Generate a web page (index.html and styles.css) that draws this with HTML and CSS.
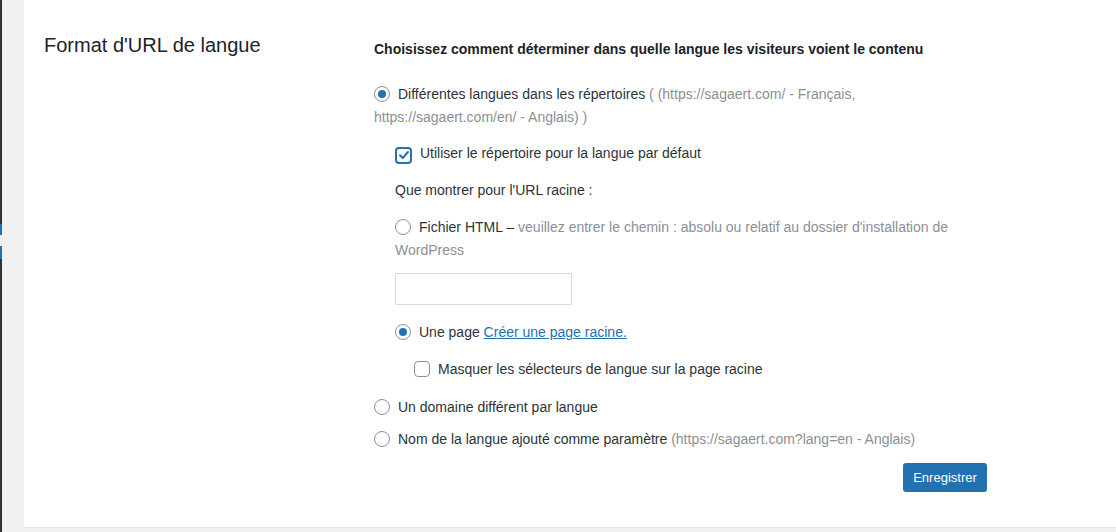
FILE: index.html
```html
<!DOCTYPE html>
<html lang="fr">
<head>
  <meta charset="UTF-8">
  <meta name="viewport" content="width=device-width, initial-scale=1.0">
  <title>Format d'URL de langue</title>
  <link rel="stylesheet" href="styles.css">
</head>
<body>
  <div class="layout">
    <div class="admin-menu">
      <div class="menu-dark menu-top"></div>
      <div class="menu-current"></div>
      <div class="menu-arrow"></div>
      <div class="menu-current menu-current-end"></div>
      <div class="menu-dark menu-rest"></div>
    </div>
    <div class="page">
      <div class="panel">
        <div class="setting-row">
          <h2 class="setting-label">Format d'URL de langue</h2>
          <div class="setting-field">
            <p class="field-title">Choisissez comment déterminer dans quelle langue les visiteurs voient le contenu</p>

            <label class="option option-first">
              <span class="radio checked"></span>Différentes langues dans les répertoires <span class="muted">( (https://sagaert.com/ - Français,</span><br>
              <span class="muted">https://sagaert.com/en/ - Anglais) )</span>
            </label>

            <div class="sub-options">
              <label class="option option-check">
                <span class="checkbox checked">
                  <svg width="12" height="12" viewBox="0 0 12 12"><path d="M2 6.2 L4.8 9 L10 3" fill="none" stroke="#2271b1" stroke-width="2" stroke-linecap="round" stroke-linejoin="round"/></svg>
                </span>Utiliser le répertoire pour la langue par défaut
              </label>

              <p class="option">Que montrer pour l'URL racine :</p>

              <label class="option">
                <span class="radio"></span>Fichier HTML – <span class="muted">veuillez entrer le chemin : absolu ou relatif au dossier d'installation de</span><br>
                <span class="muted">WordPress</span>
              </label>

              <input type="text" class="path-input">

              <label class="option option-page">
                <span class="radio checked"></span>Une page <a href="#" class="link">Créer une page racine.</a>
              </label>

              <label class="option option-nested">
                <span class="checkbox"></span>Masquer les sélecteurs de langue sur la page racine
              </label>
            </div>

            <label class="option option-domain">
              <span class="radio"></span>Un domaine différent par langue
            </label>

            <label class="option option-tight">
              <span class="radio"></span>Nom de la langue ajouté comme paramètre <span class="muted">(https://sagaert.com?lang=en - Anglais)</span>
            </label>

            <div class="actions">
              <button class="button-primary">Enregistrer</button>
            </div>
          </div>
        </div>
      </div>
    </div>
  </div>
</body>
</html>
```

FILE: styles.css
```css
body {
  margin: 0;
  font-family: "Liberation Sans", Arial, sans-serif;
  font-size: 14px;
  color: #2c3338;
  background: #fff;
}
.layout {
  display: flex;
  height: 532px;
  overflow: hidden;
}

/* admin menu sliver */
.admin-menu {
  width: 2px;
  display: flex;
  flex-direction: column;
  flex-shrink: 0;
}
.menu-dark {
  background: #2c3338;
}
.menu-top {
  height: 224px;
}
.menu-current {
  background: #2271b1;
  height: 11px;
}
.menu-current-end {
  height: 13px;
}
.menu-arrow {
  height: 11px;
  background: #e8eef3;
}
.menu-rest {
  flex: 1;
}

.page {
  flex: 1;
  background: #f0f0f1;
  padding-left: 22px;
}
.panel {
  background: #fff;
  height: 527px;
  border-bottom: 1px solid #e6e6e7;
}
.setting-row {
  display: flex;
  padding-left: 20px;
}
.setting-label {
  width: 330px;
  margin: 33px 0 0;
  font-size: 20px;
  font-weight: normal;
  line-height: 24px;
  color: #1d2327;
}
.setting-field {
  width: 613px;
  padding-top: 39px;
}
.field-title {
  margin: 0;
  font-weight: bold;
  line-height: 20px;
  color: #1d2327;
}

.option {
  display: block;
  margin: 14px 0 0;
  line-height: 23px;
}
.option-first {
  margin-top: 24px;
}
.option-check {
  margin-top: 13px;
}
.option-page {
  margin-top: 16px;
}
.option-domain {
  margin-top: 15px;
}
.option-tight {
  margin-top: 9px;
}
.sub-options {
  padding-left: 21px;
}
.option-nested {
  padding-left: 19px;
}
.muted {
  color: #8c8f94;
}
.link {
  color: #2271b1;
}

.radio {
  display: inline-block;
  box-sizing: border-box;
  width: 16px;
  height: 16px;
  margin: 0 8px 0 0;
  vertical-align: -3px;
  border: 1px solid #8c8f94;
  border-radius: 50%;
  background: #fff;
  position: relative;
}
.radio.checked::after {
  content: "";
  position: absolute;
  left: 3px;
  top: 3px;
  width: 8px;
  height: 8px;
  border-radius: 50%;
  background: #2271b1;
}
.checkbox {
  display: inline-flex;
  align-items: center;
  justify-content: center;
  box-sizing: border-box;
  width: 16px;
  height: 16px;
  margin: 0 8px 0 0;
  vertical-align: -3px;
  border: 1px solid #8c8f94;
  border-radius: 4px;
  background: #fff;
}
.checkbox.checked {
  width: 17px;
  height: 17px;
  border: 2px solid #2271b1;
}

.path-input {
  display: block;
  box-sizing: border-box;
  width: 177px;
  height: 32px;
  margin: 11px 0 0;
  border: 1px solid #dcdcde;
  border-radius: 0;
  background: #fff;
}

.actions {
  display: flex;
  justify-content: flex-end;
  margin-top: 12px;
}
.button-primary {
  height: 29px;
  width: 84px;
  padding: 0;
  border: none;
  border-radius: 3px;
  background: #2271b1;
  color: #fff;
  font-family: inherit;
  font-size: 13px;
}
```
